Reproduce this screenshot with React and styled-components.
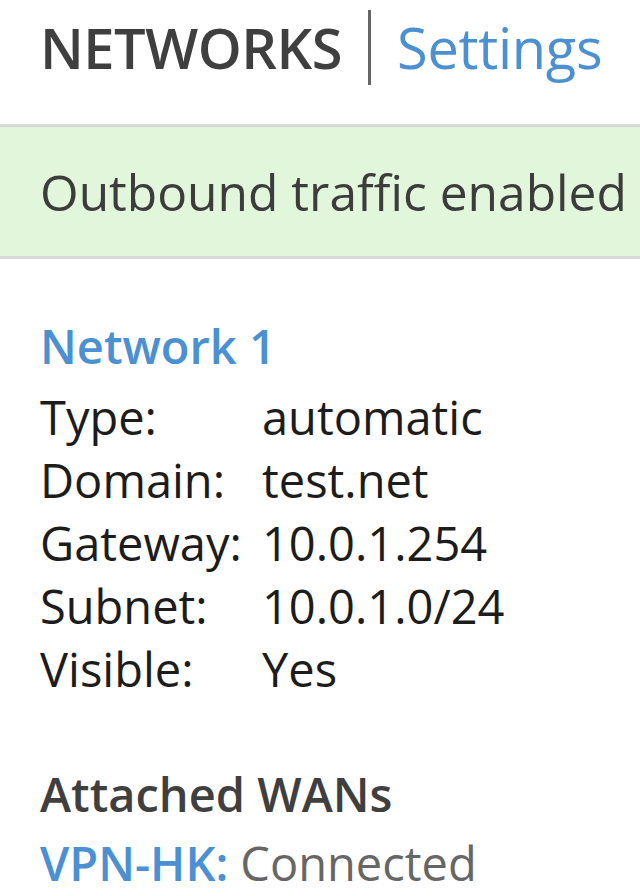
import styled, { createGlobalStyle } from "styled-components";

const GlobalStyle = createGlobalStyle`
  html, body {
    margin: 0;
    padding: 0;
    background: #ffffff;
  }
  body {
    font-family: "Open Sans", "Noto Sans", sans-serif;
    -webkit-font-smoothing: antialiased;
  }
`;

const Page = styled.div`
  width: 640px;
  height: 896px;
  overflow: hidden;
  background: #ffffff;
`;

const Header = styled.header`
  display: flex;
  align-items: center;
  height: 124px;
  padding: 0 0 30px 40px;
  box-sizing: border-box;
  font-size: 56px;
  line-height: 1;
  white-space: nowrap;
`;

const Title = styled.h1`
  margin: 0;
  font-size: inherit;
  font-weight: 600;
  color: #3f3f3f;
  letter-spacing: -0.5px;
`;

const Divider = styled.span`
  flex: 0 0 3px;
  height: 75px;
  background: #666666;
  margin: 0 26px;
`;

const HeaderLink = styled.a`
  color: #4a90d2;
  font-weight: 400;
  text-decoration: none;
  letter-spacing: -0.3px;
`;

const Banner = styled.div`
  display: flex;
  align-items: center;
  height: 129px;
  padding: 0 40px;
  background: #e2f6dc;
  border-top: 3px solid #d9d9d9;
  border-bottom: 3px solid #d9d9d9;
  font-size: 49.7px;
  color: #3c3c3c;
  white-space: nowrap;
`;

const Section = styled.section`
  padding: 56px 40px 0;
  font-size: 47px;
  line-height: 63px;
`;

const NetworkName = styled.h2`
  margin: 0 0 8px;
  font-size: inherit;
  font-weight: 600;
  color: #4a90d2;
`;

const Details = styled.dl`
  display: grid;
  grid-template-columns: 222px 1fr;
  margin: 0;
  color: #1c1c1c;
`;

const Term = styled.dt`
  margin: 0;
`;

const Value = styled.dd`
  margin: 0;
`;

const SubTitle = styled.h3`
  margin: 62px 0 6px;
  font-size: inherit;
  font-weight: 600;
  color: #3f3f3f;
`;

const WanRow = styled.div`
  color: #666666;
`;

const WanName = styled.span`
  color: #4a90d2;
  font-weight: 600;
  margin-right: 12px;
`;

const details = [
  ["Type:", "automatic"],
  ["Domain:", "test.net"],
  ["Gateway:", "10.0.1.254"],
  ["Subnet:", "10.0.1.0/24"],
  ["Visible:", "Yes"],
];

export default function App() {
  return (
    <Page>
      <GlobalStyle />
      <Header>
        <Title>NETWORKS</Title>
        <Divider />
        <HeaderLink href="#">Settings</HeaderLink>
      </Header>
      <Banner>Outbound traffic enabled</Banner>
      <Section>
        <NetworkName>Network 1</NetworkName>
        <Details>
          {details.map(([k, v]) => (
            <div key={k} style={{ display: "contents" }}>
              <Term>{k}</Term>
              <Value>{v}</Value>
            </div>
          ))}
        </Details>
        <SubTitle>Attached WANs</SubTitle>
        <WanRow>
          <WanName>VPN-HK:</WanName>Connected
        </WanRow>
      </Section>
    </Page>
  );
}
